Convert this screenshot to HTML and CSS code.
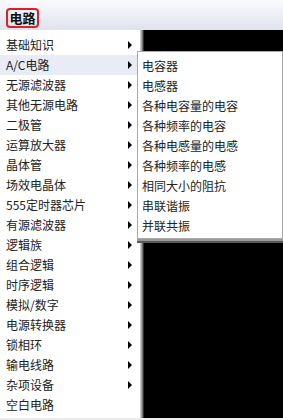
FILE: index.html
```html
<!DOCTYPE html>
<html>
<head>
<meta charset="utf-8">
<link rel="stylesheet" href="styles.css">
</head>
<body>
<div class="app">
  <div class="menubar">
    <span class="menubtn">电路</span>
  </div>
  <div class="main">
    <div class="menu">
      <div class="item"><span>基础知识</span><i class="arrow"></i></div>
      <div class="item active"><span>A/C电路</span><i class="arrow"></i></div>
      <div class="item"><span>无源滤波器</span><i class="arrow"></i></div>
      <div class="item"><span>其他无源电路</span><i class="arrow"></i></div>
      <div class="item"><span>二极管</span><i class="arrow"></i></div>
      <div class="item"><span>运算放大器</span><i class="arrow"></i></div>
      <div class="item"><span>晶体管</span><i class="arrow"></i></div>
      <div class="item"><span>场效电晶体</span><i class="arrow"></i></div>
      <div class="item"><span>555定时器芯片</span><i class="arrow"></i></div>
      <div class="item"><span>有源滤波器</span><i class="arrow"></i></div>
      <div class="item"><span>逻辑族</span><i class="arrow"></i></div>
      <div class="item"><span>组合逻辑</span><i class="arrow"></i></div>
      <div class="item"><span>时序逻辑</span><i class="arrow"></i></div>
      <div class="item"><span>模拟/数字</span><i class="arrow"></i></div>
      <div class="item"><span>电源转换器</span><i class="arrow"></i></div>
      <div class="item"><span>锁相环</span><i class="arrow"></i></div>
      <div class="item"><span>输电线路</span><i class="arrow"></i></div>
      <div class="item"><span>杂项设备</span><i class="arrow"></i></div>
      <div class="item"><span>空白电路</span></div>
    </div>
    <div class="canvas"></div>
  </div>
  <div class="status"></div>
  <div class="submenu">
    <div class="sitem">电容器</div>
    <div class="sitem">电感器</div>
    <div class="sitem">各种电容量的电容</div>
    <div class="sitem">各种频率的电容</div>
    <div class="sitem">各种电感量的电感</div>
    <div class="sitem">各种频率的电感</div>
    <div class="sitem">相同大小的阻抗</div>
    <div class="sitem">串联谐振</div>
    <div class="sitem">并联共振</div>
  </div>
</div>
</body>
</html>
```

FILE: styles.css
```css
html, body {
  margin: 0;
  padding: 0;
  background: #f0f0f0;
}
.app {
  position: relative;
  width: 283px;
  height: 420px;
  overflow: hidden;
  display: flex;
  flex-direction: column;
  font-family: "Noto Sans CJK SC", "Noto Sans", sans-serif;
  font-size: 12px;
  color: #222;
}
.menubar {
  height: 30px;
  flex: none;
  box-sizing: border-box;
  padding: 8px 0 0 6px;
  background: linear-gradient(#fbfbfd, #e9ecf4 60%, #dfe3ee);
}
.menubtn {
  display: inline-block;
  box-sizing: border-box;
  height: 20px;
  width: 33px;
  line-height: 16px;
  text-align: center;
  border: 2px solid #dd1f2b;
  border-radius: 4px;
  font-size: 13px;
  font-weight: bold;
  color: #101010;
}
.main {
  display: flex;
  height: 388px;
  flex: none;
}
.menu {
  width: 141px;
  flex: none;
  box-sizing: border-box;
  background: #fff;
  border-right: 1px solid #c9c9c9;
  padding-top: 5px;
}
.item {
  height: 20px;
  display: flex;
  align-items: center;
  justify-content: space-between;
  padding: 0 8px 0 6px;
  line-height: 20px;
}
.item.active {
  background: #e9ecf5;
}
.arrow {
  width: 0;
  height: 0;
  border-left: 4px solid #000;
  border-top: 4px solid transparent;
  border-bottom: 4px solid transparent;
}
.canvas {
  flex: 1;
  background: linear-gradient(to right, #c0c0c0, #808080 1px, #606060 2px, #000 3px);
}
.status {
  flex: 1;
  background: #ececec;
}
.submenu {
  position: absolute;
  left: 137px;
  top: 51px;
  width: 146px;
  box-sizing: border-box;
  background: #fff;
  border: 1px solid #a8a8a8;
  padding: 4px 0 2px;
  box-shadow: 0 2px 0 #9a9a9a, 0 4px 0 #5a5a5a;
}
.sitem {
  height: 20px;
  line-height: 20px;
  padding-left: 4px;
}
```
